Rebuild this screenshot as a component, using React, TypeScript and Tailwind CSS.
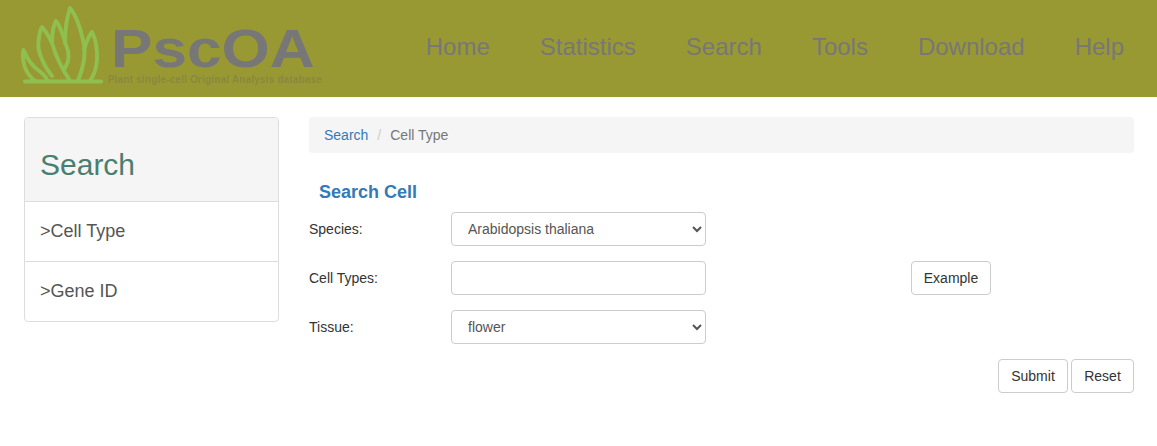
const navItems = ["Home", "Statistics", "Search", "Tools", "Download", "Help"];

function GrassLogo() {
  return (
    <svg width="90" height="85" viewBox="15 5 90 85" fill="none" stroke="#8fc04f" strokeWidth="3.9" strokeLinecap="round" strokeLinejoin="round" className="shrink-0 blur-[0.4px]">
      <path d="M25 81.5H101" />
      <path d="M35 81C26 74 21 62 23.5 50C27 58 32 66 38 70C42 73 46 77 48 81" />
      <path d="M52 76C43 65 37 50 38.5 42C39 35 40 30 42 27C47 33 51 40 53 46C56 57 63 70 70 81" />
      <path d="M52 43C52 33 53 26 56 21C61 27 64 38 66 45C70 54 69 62 65 68" />
      <path d="M65 43C65 30 67 17 70 8C76 15 81 30 84 45C86 58 82 70 78 81" />
      <path d="M84 50C86 42 89 36 92 32C96 40 97.5 50 97 60C96.5 68 94 75 90 81" />
    </svg>
  );
}

function Header() {
  return (
    <header className="flex h-[97px] items-start bg-[#999933]">
      <div className="ml-[15px] mt-[5px] flex items-start">
        <GrassLogo />
        <div className="ml-[3px] mt-[21px] flex flex-col blur-[0.3px]">
          <span className="ml-[3px] origin-left scale-x-[1.15] text-[54px] font-bold leading-[44px] text-[#777777]">PscOA</span>
          <span className="mt-[4px] text-[10px] font-bold leading-[12px] tracking-[0.18px] text-[#88883f]">Plant single-cell Original Analysis database</span>
        </div>
      </div>
      <nav className="ml-auto mr-[33px] mt-[32px] flex gap-[50px] text-2xl leading-[30px] text-[#777777]">
        {navItems.map((item) => (
          <a key={item} href="#">{item}</a>
        ))}
      </nav>
    </header>
  );
}

function Sidebar() {
  return (
    <aside className="h-[205px] w-[255px] shrink-0 overflow-hidden rounded border border-[#dddddd]">
      <h2 className="flex h-[83px] items-center bg-[#f5f5f5] px-[15px] pt-[9px] text-[30px] text-[#4a7f70]">Search</h2>
      <a href="#" className="flex h-[60px] items-center border-t border-[#dddddd] px-[15px] pb-[2px] text-lg text-[#555555]">&gt;Cell Type</a>
      <a href="#" className="flex h-[60px] items-center border-t border-[#dddddd] px-[15px] pb-[2px] text-lg text-[#555555]">&gt;Gene ID</a>
    </aside>
  );
}

const fieldClass = "h-[34px] w-[255px] rounded border border-[#cccccc] bg-white px-3 text-sm text-[#555555]";
const buttonClass = "h-[34px] rounded border border-[#cccccc] bg-white text-sm text-[#333333]";

function SearchForm() {
  return (
    <section className="min-w-0 flex-1">
      <div className="flex h-9 items-center gap-[9px] rounded bg-[#f5f5f5] px-[15px] text-sm">
        <a href="#" className="text-[#337ab7]">Search</a>
        <span className="text-[#cccccc]">/</span>
        <span className="text-[#777777]">Cell Type</span>
      </div>
      <h3 className="mt-[29px] pl-[10px] text-lg font-bold leading-5 text-[#337ab7]">Search Cell</h3>
      <div className="mt-[10px] flex flex-col gap-[15px] text-sm text-[#333333]">
        <div className="flex items-center">
          <label className="w-[142px]">Species:</label>
          <select className={fieldClass} defaultValue="Arabidopsis thaliana">
            <option>Arabidopsis thaliana</option>
          </select>
        </div>
        <div className="flex items-center">
          <label className="w-[142px]">Cell Types:</label>
          <input type="text" className={fieldClass} />
          <button type="button" className={`${buttonClass} ml-[205px] w-20`}>Example</button>
        </div>
        <div className="flex items-center">
          <label className="w-[142px]">Tissue:</label>
          <select className={fieldClass} defaultValue="flower">
            <option>flower</option>
          </select>
        </div>
        <div className="flex justify-end gap-[3px]">
          <button type="button" className={`${buttonClass} w-[70px]`}>Submit</button>
          <button type="button" className={`${buttonClass} w-[63px]`}>Reset</button>
        </div>
      </div>
    </section>
  );
}

export default function App() {
  return (
    <div className="min-h-[446px] bg-white font-['Liberation_Sans',Arial,sans-serif]">
      <Header />
      <main className="flex gap-[30px] pl-6 pr-[23px] pt-5">
        <Sidebar />
        <SearchForm />
      </main>
    </div>
  );
}
